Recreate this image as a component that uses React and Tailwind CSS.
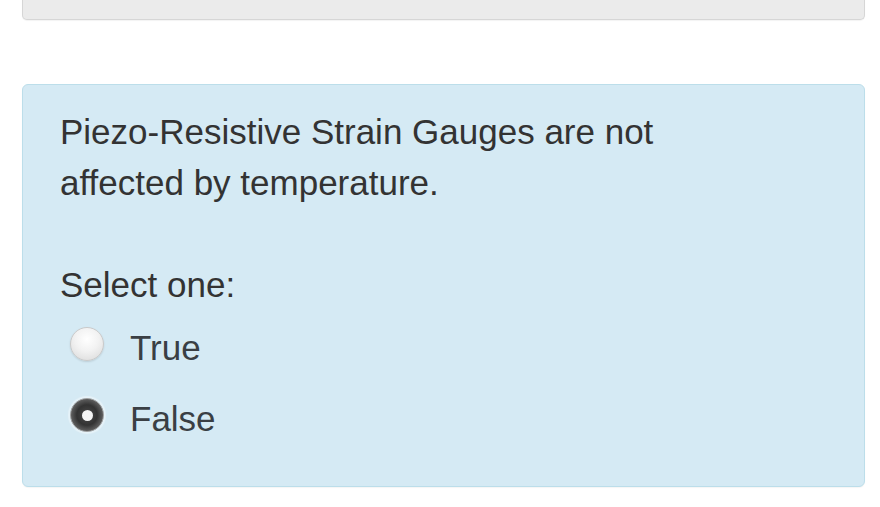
export default function App() {
  return (
    <div className="w-[880px] h-[507px] bg-white overflow-hidden" style={{ fontFamily: '"Liberation Sans", Arial, sans-serif' }}>
      <div className="ml-[22px] mr-[15px] h-[21px] -mt-[1px] bg-[#ebebeb] border border-[#d6d6d6] border-t-0 rounded-b-[5px] shadow-[0_1px_1px_rgba(0,0,0,0.05)]" />
      <div className="ml-[22px] mr-[15px] mt-[64px] h-[403px] bg-[#d5eaf4] border border-[#bcdeea] rounded-[6px] pl-[37px] pt-[21px] text-[#333333] shadow-[0_1px_1px_rgba(0,0,0,0.04)]">
        <p className="text-[35px] leading-[51px]">
          Piezo-Resistive Strain Gauges are not<br />affected by temperature.
        </p>
        <p className="text-[35px] leading-[51px] mt-[51px]">Select one:</p>
        <div className="flex items-start mt-[12px] h-[51px]">
          <span className="mt-[5px] ml-[10px] w-[34px] h-[34px] rounded-full bg-[radial-gradient(circle_at_50%_35%,#ffffff_0%,#f2f2f2_45%,#d8d8d8_100%)] border border-[#cacaca] shadow-[0_1px_2px_rgba(0,0,0,0.12)]" />
          <span className="ml-[26px] text-[35px] leading-[51px] text-[#3a3f44]">True</span>
        </div>
        <div className="flex items-start mt-[20px] h-[51px]">
          <span className="mt-[5px] ml-[10px] w-[34px] h-[34px] rounded-full bg-[radial-gradient(circle_at_50%_50%,#4a4a4a_0%,#333333_45%,#8f8f8f_100%)] border border-[#a0a0a0] flex items-center justify-center shadow-[0_0_1px_2px_rgba(255,255,255,0.4)]">
            <span className="w-[11px] h-[11px] rounded-full bg-[#f4f4f4]" />
          </span>
          <span className="ml-[26px] text-[35px] leading-[51px] text-[#3a3f44]">False</span>
        </div>
      </div>
    </div>
  );
}
